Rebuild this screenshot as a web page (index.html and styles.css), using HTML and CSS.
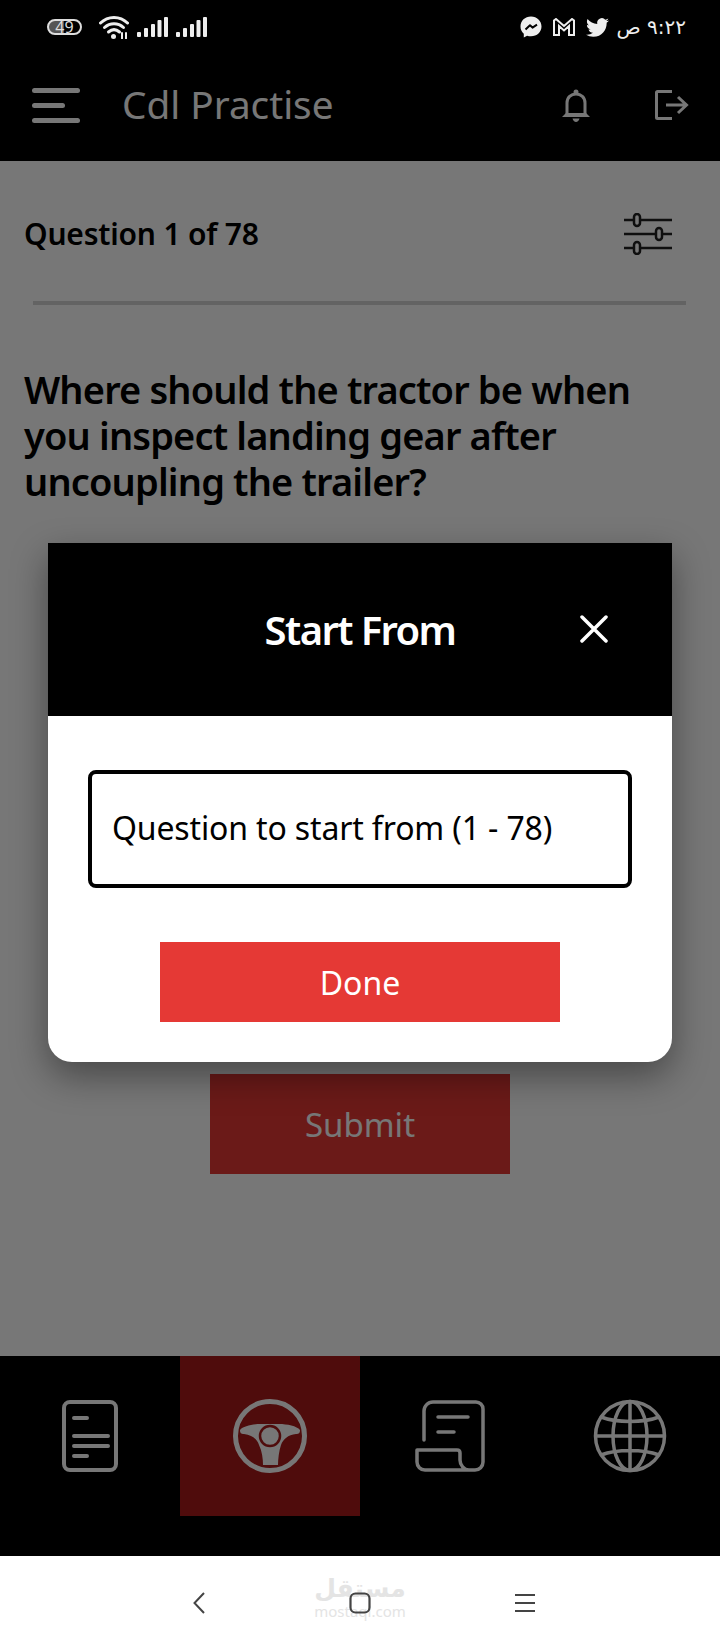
FILE: index.html
```html
<!DOCTYPE html>
<html>
<head>
    <meta charset="UTF-8">
    <title>Cdl Practise</title>
    <link rel="stylesheet" href="styles.css">
</head>
<body>
<div class="phone">
    <div class="status-bar">
        <div class="status-left">
            <span class="battery" style="background-size: 49% 100%">49</span>
            <svg class="wifi" viewBox="0 0 30 24" width="30" height="24" fill="none" stroke="#eee" stroke-linecap="round">
                <path d="M1.500 8C9 .5 21 .5 28.500 8" stroke-width="3"/>
                <path d="M5.500 12.500C11 7.500 19 7.500 24.500 12.500" stroke-width="3"/>
                <path d="M9.500 17C13 14 17 14 20.500 17" stroke-width="3"/>
                <circle cx="14.500" cy="21.500" r="2.500" fill="#eee" stroke="none"/>
                <path d="M23 18v5.500M27 18v5.500" stroke-width="2"/>
            </svg>
            <svg class="signal" viewBox="0 0 31 20" width="31" height="20" fill="#eee">
                <rect x="0" y="15" width="4" height="5" rx="1"/><rect x="7" y="11" width="4" height="9" rx="1"/><rect x="14" y="7" width="4" height="13" rx="1"/><rect x="20.500" y="3" width="4" height="17" rx="1"/><rect x="27" y="0" width="4" height="20" rx="1"/>
            </svg>
            <svg class="signal" viewBox="0 0 31 20" width="31" height="20" fill="#eee">
                <rect x="0" y="15" width="4" height="5" rx="1"/><rect x="7" y="11" width="4" height="9" rx="1"/><rect x="14" y="7" width="4" height="13" rx="1"/><rect x="20.500" y="3" width="4" height="17" rx="1"/><rect x="27" y="0" width="4" height="20" rx="1"/>
            </svg>
        </div>
        <div class="status-right">
            <svg viewBox="0 0 22 22" width="22" height="22">
                <path fill="#eee" d="M11 .5C5 .5.500 4.800.500 10.500c0 3 1.200 5.500 3.300 7.300V21.500l3.300-1.800c1.200.4 2.500.6 3.900.6 6 0 10.500-4.300 10.500-9.800S17 .5 11 .5z"/>
                <path fill="none" stroke="#000" stroke-width="2" stroke-linejoin="round" d="M5.500 13.500l4.500-4.200 2.500 2.300 4.500-3"/>
            </svg>
            <svg viewBox="0 0 22 18" width="22" height="18" fill="none" stroke="#eee" stroke-width="2">
                <path d="M1 17V2.500L3 1l8 7 8-7 2 1.500V17h-5V8l-5 4.500L6 8v9z"/>
            </svg>
            <svg viewBox="0 0 24 24" width="23" height="23">
                <path fill="#eee" d="M23.953 4.570a10 10 0 01-2.825.775 4.958 4.958 0 002.163-2.723c-.951.555-2.005.959-3.127 1.184a4.920 4.920 0 00-8.384 4.482C7.690 8.095 4.067 6.130 1.640 3.162a4.822 4.822 0 00-.666 2.475c0 1.710.870 3.213 2.188 4.096a4.904 4.904 0 01-2.228-.616v.060a4.923 4.923 0 003.946 4.827 4.996 4.996 0 01-2.212.085 4.936 4.936 0 004.604 3.417 9.867 9.867 0 01-6.102 2.105c-.390 0-.779-.023-1.170-.067a13.995 13.995 0 007.557 2.209c9.053 0 13.998-7.496 13.998-13.985 0-.210 0-.420-.015-.630A9.935 9.935 0 0024 4.590z"/>
            </svg>
            <span class="clock" dir="rtl">٩:٢٢ ص</span>
        </div>
    </div>

    <div class="app-bar">
        <div class="burger"><i></i><i class="short"></i><i></i></div>
        <div class="app-title">Cdl Practise</div>
        <svg class="bell" viewBox="0 0 28 33" width="28" height="33">
            <path fill="none" stroke="#fff" stroke-width="3" d="M5 25V14C5 8.500 9 5 14 5s9 3.500 9 9v11"/>
            <circle cx="14" cy="3" r="2.500" fill="#fff"/>
            <path fill="#fff" d="M0 28l4-4h20l4 4z"/>
            <path fill="#fff" d="M10.500 29.500h7C17 31.500 15.500 33 14 33s-3-1.500-3.500-3.500z"/>
        </svg>
        <svg class="exit" viewBox="0 0 34 30" width="34" height="30" fill="none" stroke="#fff" stroke-width="3">
            <path d="M17 1.500H2.500a1 1 0 00-1 1v25a1 1 0 001 1H17"/>
            <path d="M11 15h20M23 7l8.500 8-8.500 8"/>
        </svg>
    </div>

    <div class="content">
        <div class="quiz-head">
            <div class="quiz-count">Question 1 of 78</div>
            <svg class="sliders" viewBox="0 0 48 42" width="48" height="42" fill="none" stroke="#222" stroke-width="2.500">
                <path d="M0 7h48M0 21h48M0 35h48"/>
                <rect x="10" y="1" width="6" height="12" rx="3" fill="#fff"/>
                <rect x="32" y="15" width="6" height="12" rx="3" fill="#fff"/>
                <rect x="10" y="29" width="6" height="12" rx="3" fill="#fff"/>
            </svg>
        </div>
        <div class="rule"></div>
        <h1 class="question">Where should the tractor be when you inspect landing gear after uncoupling the trailer?</h1>
        <button class="btn submit">Submit</button>
    </div>

    <div class="tabs">
        <div class="tab">
            <svg viewBox="0 0 56 72" width="56" height="72" fill="none" stroke="#fff" stroke-width="4" stroke-linecap="round">
                <rect x="2" y="2" width="52" height="68" rx="6"/>
                <path d="M12 18h13M12 36h34M12 46h34M12 56h13"/>
            </svg>
        </div>
        <div class="tab active">
            <svg viewBox="0 0 74 74" width="74" height="74">
                <circle cx="37" cy="37" r="34.500" fill="none" stroke="#fff" stroke-width="5"/>
                <path fill="#fff" d="M7 31C10 27 20 25 28 25H46C54 25 64 27 67 31 67 34 66 35 63 35 55 36 50 40 48 46 46 52 45 60 45 66H30C30 60 29 52 26 46 24 40 19 36 11 35 8 35 7 34 7 31z"/>
                <circle cx="37" cy="37" r="10" fill="#fff" stroke="#a91a1a" stroke-width="2.500"/>
            </svg>
        </div>
        <div class="tab">
            <svg viewBox="0 0 70 72" width="70" height="72" fill="none" stroke="#fff" stroke-width="3.500" stroke-linecap="round" stroke-linejoin="round">
                <path d="M9 40V11a9 9 0 019-9h43a7 7 0 017 7v53a8 8 0 01-8 8H10a8 8 0 01-8-8V50h40c2 0 3 1 3 3v7c0 5 4 10 9 10"/>
                <path d="M23 17h30M23 32h16"/>
            </svg>
        </div>
        <div class="tab">
            <svg viewBox="0 0 74 74" width="74" height="74" fill="none" stroke="#fff" stroke-width="3.500">
                <circle cx="37" cy="37" r="34.500"/>
                <ellipse cx="37" cy="37" rx="17" ry="34.500"/>
                <path d="M37 2.500v69M2.500 37h69M8 18c16 6 42 6 58 0M8 56c16-6 42-6 58 0"/>
            </svg>
        </div>
    </div>

    <div class="sys-nav">
        <svg viewBox="0 0 12 22" width="12" height="22" fill="none" stroke="#444" stroke-width="2"><path d="M11 1L1.500 11 11 21"/></svg>
        <svg viewBox="0 0 22 22" width="22" height="22" fill="none" stroke="#444" stroke-width="2.200"><rect x="1.500" y="1.500" width="19" height="19" rx="5"/></svg>
        <svg viewBox="0 0 20 18" width="20" height="18" fill="none" stroke="#444" stroke-width="2"><path d="M0 1h20M0 9h20M0 17h20"/></svg>
    </div>
    <div class="watermark"><span class="wm-ar" dir="rtl">مستقل</span><span class="wm-en">mostaql.com</span></div>

    <div class="dim">
        <div class="dialog">
            <div class="dialog-head">
                <span class="dialog-title">Start From</span>
                <svg class="dialog-close" viewBox="0 0 28 28" width="28" height="28" fill="none" stroke="#fff" stroke-width="3.500" stroke-linecap="round"><path d="M2 2l24 24M26 2L2 26"/></svg>
            </div>
            <div class="dialog-body">
                <div class="field">Question to start from (1 - 78)</div>
                <button class="btn done">Done</button>
            </div>
        </div>
    </div>
</div>
</body>
</html>
```

FILE: styles.css
```css
* {
    box-sizing: border-box;
}

html,
body {
    margin: 0;
    background: #fff;
}

.phone {
    display: flex;
    flex-direction: column;
    font-family: "Noto Sans", sans-serif;
    height: 1650px;
    overflow: hidden;
    position: relative;
    width: 720px;
}

.status-bar {
    align-items: center;
    background: #000;
    display: flex;
    height: 50px;
    justify-content: space-between;
    padding: 4px 34px 0 47px;
}

.status-left,
.status-right {
    align-items: center;
    display: flex;
}

.status-left {
    gap: 8px;
}

.status-right {
    gap: 11px;
}

.battery {
    background: linear-gradient(#555, #555) no-repeat;
    border: 2px solid #ddd;
    border-radius: 9px;
    color: #ddd;
    font-size: 16px;
    height: 16px;
    line-height: 12px;
    margin-right: 9px;
    text-align: center;
    width: 35px;
}

.clock {
    color: #eee;
    font-family: "DejaVu Sans", sans-serif;
    font-size: 20px;
    line-height: 24px;
    margin-left: -4px;
}

.app-bar {
    align-items: center;
    background: #000;
    color: #fff;
    display: flex;
    height: 111px;
    padding: 0 31px 1px 32px;
}

.burger {
    display: flex;
    flex-direction: column;
    gap: 10px;
    width: 48px;
}

.burger i {
    background: #fff;
    border-radius: 3px;
    display: block;
    height: 5px;
}

.burger i.short {
    width: 33px;
}

.app-title {
    flex: 1;
    font-size: 38.700px;
    margin: 0 0 2px 42px;
}

.bell {
    margin-right: 65px;
}

.content {
    background: #fff;
    flex: 1;
    padding: 0 24px;
}

.quiz-head {
    align-items: center;
    display: flex;
    height: 141px;
    justify-content: space-between;
    padding: 4px 24px 0 0;
}

.quiz-count {
    font-size: 30px;
    font-weight: 600;
    letter-spacing: -0.2px;
}

.rule {
    background: #d4d4d4;
    height: 4px;
    margin: -1px 10px 0 9px;
    width: 653px;
}

.question {
    font-size: 38px;
    font-weight: 600;
    letter-spacing: -0.85px;
    line-height: 46px;
    margin: 61px 0 0;
}

.btn {
    background: #e53935;
    border: 0;
    color: #fff;
    display: block;
    font-family: inherit;
    font-size: 32px;
}

.submit {
    font-size: 33px;
    height: 100px;
    margin: 570px auto 0;
    width: 300px;
}

.tabs {
    background: #000;
    display: flex;
    height: 200px;
}

.tab {
    align-items: center;
    display: flex;
    height: 160px;
    justify-content: center;
    width: 180px;
}

.tab.active {
    background: #a91a1a;
}

.sys-nav {
    align-items: center;
    display: flex;
    height: 94px;
    justify-content: space-between;
    padding: 0 185px 0 193px;
    position: relative;
    z-index: 1;
}

.watermark {
    align-items: center;
    color: #e4e4e4;
    display: flex;
    flex-direction: column;
    left: 316px;
    position: absolute;
    top: 1574px;
    width: 88px;
}

.wm-ar {
    font-family: "DejaVu Sans", sans-serif;
    font-size: 25px;
    font-weight: 700;
    line-height: 30px;
    white-space: nowrap;
}

.wm-en {
    font-size: 15px;
    line-height: 14px;
    white-space: nowrap;
}

.dim {
    align-items: center;
    background: rgba(0, 0, 0, 0.533);
    bottom: 94px;
    display: flex;
    justify-content: center;
    left: 0;
    position: absolute;
    right: 0;
    top: 49px;
}

.dialog {
    background: #fff;
    border-radius: 0 0 24px 24px;
    box-shadow: 0 14px 36px rgba(0, 0, 0, 0.4);
    height: 519px;
    width: 624px;
}

.dialog-head {
    align-items: center;
    background: #000;
    color: #fff;
    display: flex;
    height: 173px;
    justify-content: center;
    position: relative;
}

.dialog-title {
    font-size: 40px;
    font-weight: 600;
    letter-spacing: -1.6px;
}

.dialog-close {
    position: absolute;
    right: 64px;
    top: 72px;
}

.dialog-body {
    padding: 54px 40px 0;
}

.field {
    align-items: center;
    border: 4px solid #000;
    border-radius: 8px;
    color: #000;
    display: flex;
    font-size: 32px;
    height: 118px;
    letter-spacing: -0.15px;
    padding: 0 0 4px 20px;
}

.done {
    height: 80px;
    margin: 54px auto 0;
    width: 400px;
}
```
